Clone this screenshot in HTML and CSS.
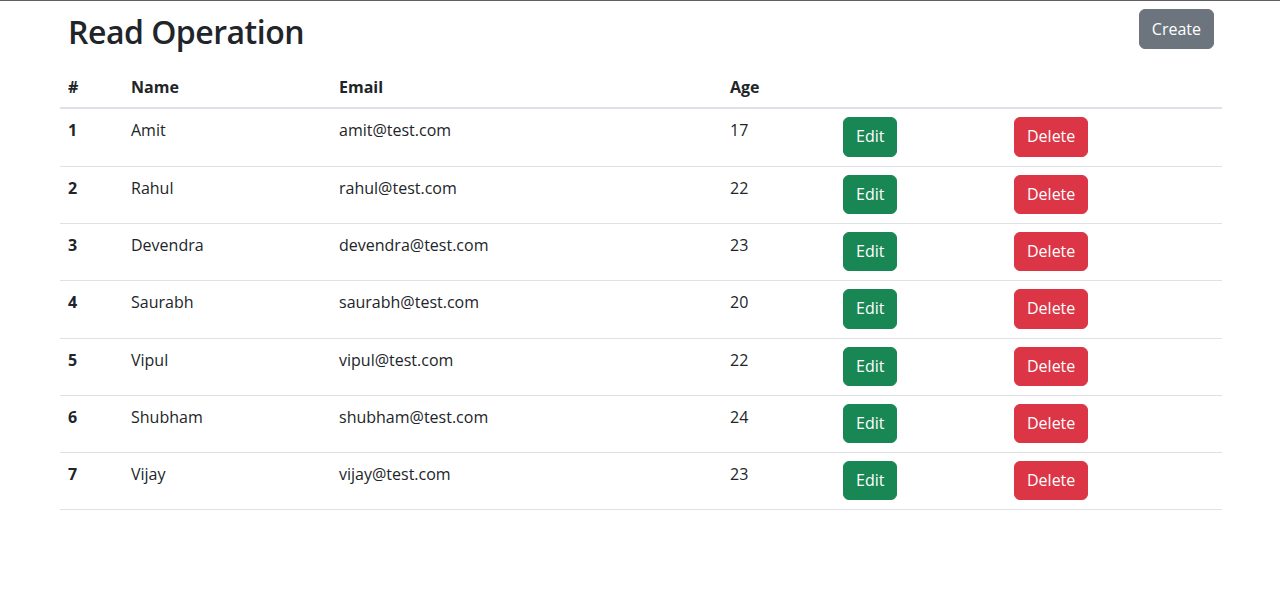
FILE: index.html
```html
<!DOCTYPE html>
<html lang="en">
<head>
<meta charset="utf-8">
<title>Read Operation</title>
<link rel="stylesheet" href="styles.css">
</head>
<body>
<div class="page">
  <div class="top">
    <h2 class="title">Read Operation</h2>
    <button class="btn btn-secondary">Create</button>
  </div>
  <table class="table">
    <colgroup>
      <col class="c1"><col class="c2"><col class="c3"><col class="c4"><col class="c5"><col class="c6">
    </colgroup>
    <thead>
      <tr><th>#</th><th>Name</th><th>Email</th><th>Age</th><th></th><th></th></tr>
    </thead>
    <tbody>
      <tr><th>1</th><td>Amit</td><td>amit@test.com</td><td>17</td><td class="act"><button class="btn btn-success">Edit</button></td><td class="act"><button class="btn btn-danger">Delete</button></td></tr>
      <tr><th>2</th><td>Rahul</td><td>rahul@test.com</td><td>22</td><td class="act"><button class="btn btn-success">Edit</button></td><td class="act"><button class="btn btn-danger">Delete</button></td></tr>
      <tr><th>3</th><td>Devendra</td><td>devendra@test.com</td><td>23</td><td class="act"><button class="btn btn-success">Edit</button></td><td class="act"><button class="btn btn-danger">Delete</button></td></tr>
      <tr><th>4</th><td>Saurabh</td><td>saurabh@test.com</td><td>20</td><td class="act"><button class="btn btn-success">Edit</button></td><td class="act"><button class="btn btn-danger">Delete</button></td></tr>
      <tr><th>5</th><td>Vipul</td><td>vipul@test.com</td><td>22</td><td class="act"><button class="btn btn-success">Edit</button></td><td class="act"><button class="btn btn-danger">Delete</button></td></tr>
      <tr><th>6</th><td>Shubham</td><td>shubham@test.com</td><td>24</td><td class="act"><button class="btn btn-success">Edit</button></td><td class="act"><button class="btn btn-danger">Delete</button></td></tr>
      <tr><th>7</th><td>Vijay</td><td>vijay@test.com</td><td>23</td><td class="act"><button class="btn btn-success">Edit</button></td><td class="act"><button class="btn btn-danger">Delete</button></td></tr>
    </tbody>
  </table>
</div>
</body>
</html>
```
FILE: styles.css
```css
html, body {
  margin: 0;
  padding: 0;
  background: #fff;
}
body {
  border-top: 1px solid #5f6062;
  font-family: "Open Sans", "Noto Sans", sans-serif;
  font-size: 16px;
  line-height: 1.5;
  color: #212529;
}
.page {
  width: 1162px;
  margin-left: 60px;
}
.top {
  display: flex;
  justify-content: space-between;
  align-items: flex-start;
  padding: 0 8px 0 8px;
}
.title {
  margin: 12px 0 0 0;
  font-size: 32px;
  font-weight: 600;
  line-height: 38.4px;
  letter-spacing: -0.5px;
}
.btn {
  display: inline-block;
  font-family: inherit;
  font-size: 16px;
  line-height: 25.3px;
  padding: 6px 12px;
  border: 1px solid transparent;
  border-radius: 6px;
  color: #fff;
  cursor: pointer;
}
.top .btn {
  margin-top: 8px;
  line-height: 26px;
}
.btn-secondary { background: #6c757d; border-color: #6c757d; }
.btn-success { background: #198754; border-color: #198754; }
.btn-danger { background: #dc3545; border-color: #dc3545; }
.table {
  width: 1162px;
  border-collapse: collapse;
  table-layout: fixed;
  margin-top: 15px;
}
.c1 { width: 63px; }
.c2 { width: 208px; }
.c3 { width: 391px; }
.c4 { width: 113px; }
.c5 { width: 171px; }
.c6 { width: 216px; }
.table th, .table td {
  text-align: left;
  vertical-align: top;
  padding: 8px 8px;
}
.table th { font-weight: 700; }
.table thead th {
  padding-top: 9px;
  padding-bottom: 8px;
  border-bottom: 2px solid #dee2e6;
}
.table tbody th, .table tbody td {
  padding: 9px 8px 8px 8px;
  border-bottom: 1px solid #dee2e6;
}
.table tbody td.act {
  padding-top: 8px;
  padding-bottom: 9px;
}
```
